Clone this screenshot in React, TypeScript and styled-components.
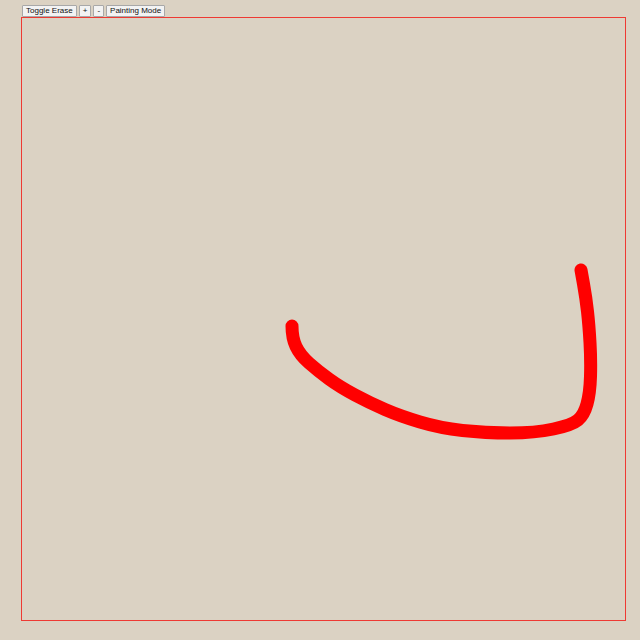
import styled, { createGlobalStyle } from "styled-components";

const GlobalStyle = createGlobalStyle`
  html, body {
    margin: 0;
    padding: 0;
    background-color: #dbd2c3;
    font-family: "Liberation Sans", Arial, sans-serif;
  }
`;

const StyledPage = styled.div`
  padding: 5px 0 0 21px;
  display: flex;
  flex-direction: column;
  align-items: flex-start;
`;

const StyledToolbar = styled.div`
  display: flex;
  gap: 2px;
  padding-left: 1px;
`;

const StyledButton = styled.button`
  height: 12px;
  padding: 0 3px;
  margin: 0;
  font-family: "Liberation Sans", Arial, sans-serif;
  font-size: 8px;
  line-height: 10px;
  color: #111;
  background-color: #f3f3f3;
  border: 1px solid #a8a8a8;
  border-radius: 1px;
  cursor: pointer;
`;

const StyledFrame = styled.div`
  width: 603px;
  height: 602px;
  border: 1px solid #ee3a33;
`;

const StyledCanvas = styled.svg`
  display: block;
  width: 100%;
  height: 100%;
`;

// stroke recorded in page coordinates, shifted into the canvas box below
const stroke: [number, number][] = [
  [292, 326],
  [292, 338],
  [300, 355],
  [318, 371],
  [340, 387],
  [370, 403],
  [400, 416],
  [440, 428],
  [485, 433],
  [535, 433],
  [572, 425],
  [584, 415],
  [590, 393],
  [591, 360],
  [589, 325],
  [586, 298],
  [581, 270],
];

function smoothPath(pts: [number, number][]) {
  const p = pts.map(([x, y]) => [x - 22, y - 18]);
  let d = `M${p[0][0]},${p[0][1]}`;
  for (let i = 1; i < p.length - 1; i++) {
    const mx = (p[i][0] + p[i + 1][0]) / 2;
    const my = (p[i][1] + p[i + 1][1]) / 2;
    d += ` Q${p[i][0]},${p[i][1]} ${mx},${my}`;
  }
  const last = p[p.length - 1];
  d += ` L${last[0]},${last[1]}`;
  return d;
}

export default function App() {
  return (
    <StyledPage>
      <GlobalStyle />
      <StyledToolbar>
        <StyledButton>Toggle Erase</StyledButton>
        <StyledButton>+</StyledButton>
        <StyledButton>-</StyledButton>
        <StyledButton>Painting Mode</StyledButton>
      </StyledToolbar>
      <StyledFrame>
        <StyledCanvas viewBox="0 0 603 602">
          <path
            d={smoothPath(stroke)}
            fill="none"
            stroke="#ff0000"
            strokeWidth={13}
            strokeLinecap="round"
            strokeLinejoin="round"
          />
        </StyledCanvas>
      </StyledFrame>
    </StyledPage>
  );
}
